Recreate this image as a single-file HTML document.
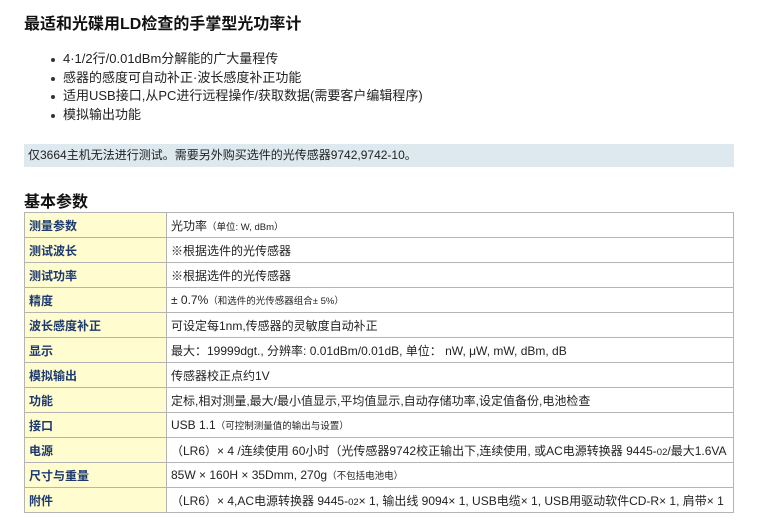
<!DOCTYPE html>
<html><head><meta charset="utf-8"><style>
*{margin:0;padding:0;box-sizing:border-box}
body{width:758px;height:524px;background:#fff;font-family:"Liberation Sans","Noto Sans CJK SC",sans-serif;color:#222;font-size:12px;overflow:hidden;position:relative}
h1{position:absolute;left:24px;top:10px;font-size:16px;font-weight:bold;color:#111;letter-spacing:0}
ul{position:absolute;left:51px;top:50px;list-style:none}
li{font-size:13px;line-height:18.5px;height:18.5px;padding-left:12px;position:relative;color:#222}
li:before{content:"";position:absolute;left:0;top:8px;width:4px;height:4px;background:#333;border-radius:2px}
.note{position:absolute;left:24px;top:144px;width:710px;height:23px;background:#dde9ef;font-size:12px;line-height:23px;padding-left:4px;color:#222}
h2{position:absolute;left:24px;top:188px;font-size:16px;font-weight:bold;color:#111}
table{position:absolute;left:24px;top:212px;width:710px;border-collapse:collapse}
td{border:1px solid #b4b4b4;height:25px;font-size:12px;padding:0 4px;vertical-align:middle;white-space:nowrap}
td.l{width:142px;background:#fffccf;color:#1d3a70;font-weight:bold}
small{font-size:9.5px}
</style></head><body>
<h1>最适和光碟用LD检查的手掌型光功率计</h1>
<ul>
<li>4·1/2行/0.01dBm分解能的广大量程传</li>
<li>感器的感度可自动补正·波长感度补正功能</li>
<li>适用USB接口,从PC进行远程操作/获取数据(需要客户编辑程序)</li>
<li>模拟输出功能</li>
</ul>
<div class="note">仅3664主机无法进行测试。需要另外购买选件的光传感器9742,9742-10。</div>
<h2>基本参数</h2>
<table>
<tr><td class="l">测量参数</td><td>光功率<small>（单位: W, dBm）</small></td></tr>
<tr><td class="l">测试波长</td><td>※根据选件的光传感器</td></tr>
<tr><td class="l">测试功率</td><td>※根据选件的光传感器</td></tr>
<tr><td class="l">精度</td><td>± 0.7%<small>（和选件的光传感器组合± 5%）</small></td></tr>
<tr><td class="l">波长感度补正</td><td>可设定每1nm,传感器的灵敏度自动补正</td></tr>
<tr><td class="l">显示</td><td>最大：19999dgt., 分辨率: 0.01dBm/0.01dB, 单位： nW, μW, mW, dBm, dB</td></tr>
<tr><td class="l">模拟输出</td><td>传感器校正点约1V</td></tr>
<tr><td class="l">功能</td><td>定标,相对测量,最大/最小值显示,平均值显示,自动存储功率,设定值备份,电池检查</td></tr>
<tr><td class="l">接口</td><td>USB 1.1<small>（可控制测量值的输出与设置）</small></td></tr>
<tr><td class="l">电源</td><td>（LR6）× 4 /连续使用 60小时（光传感器9742校正输出下,连续使用, 或AC电源转换器 9445-<small>02</small>/最大1.6VA</td></tr>
<tr><td class="l">尺寸与重量</td><td>85W × 160H × 35Dmm, 270g<small>（不包括电池电）</small></td></tr>
<tr><td class="l">附件</td><td>（LR6）× 4,AC电源转换器 9445-<small>02</small>× 1, 输出线 9094× 1, USB电缆× 1, USB用驱动软件CD-R× 1, 肩带× 1</td></tr>
</table>
</body></html>
